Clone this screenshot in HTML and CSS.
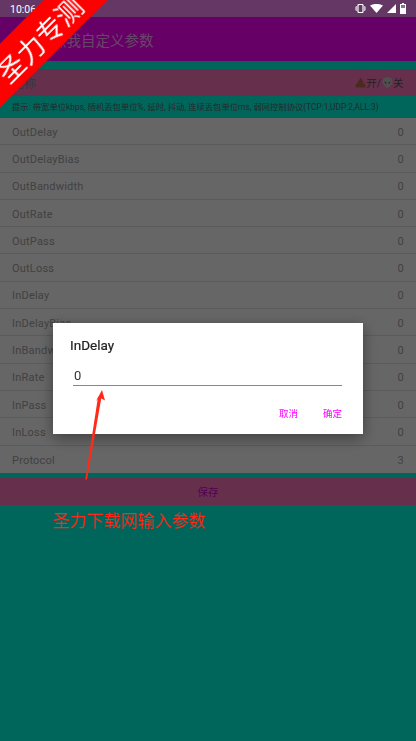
FILE: index.html
```html
<!DOCTYPE html>
<html lang="zh">
<head>
  <meta charset="UTF-8">
  <title>点我自定义参数</title>
  <meta name="viewport" content="width=device-width, initial-scale=1.0">
  <link rel="stylesheet" href="styles.css">
</head>
<body>
<div class="status-bar">
  <span class="hora">10:06</span>
  <div class="status-icons">
    <svg width="11" height="9" viewBox="0 0 11 9"><rect x="3" y="0.5" width="5" height="8" rx="1" fill="none" stroke="#fff" stroke-width="1.2"/><path d="M1.3 2v5M9.7 2v5M0 3v3M11 3v3" stroke="#fff" stroke-width="0.8"/></svg>
    <svg width="13" height="9" viewBox="0 0 13 9"><path d="M0 1.6Q6.500 -1.800 13 1.600L6.500 9Z" fill="#fff"/></svg>
    <svg width="9" height="9" viewBox="0 0 9 9"><path d="M9 0V9H0Z" fill="#fff"/></svg>
    <svg width="6" height="11" viewBox="0 0 6 11"><path d="M2 0H4V1H6V11H0V1H2Z" fill="#fff"/><path d="M1 2H5V5H1Z" fill="#8d6f8d"/></svg>
  </div>
</div>

<header class="app-bar">点我自定义参数</header>

<div class="linha-nome">
  <span>昵称</span>
  <span class="toggle">
    <svg width="11" height="11" viewBox="0 0 10 10"><path d="M5 0.500Q7 2 6.500 3Q8 4 7.500 5.500Q10 6.500 9.500 9.500H0.500Q0 6.500 2.500 5.500Q2 4 3.500 3.500Q4 2 5 0.500Z" fill="#b96a46"/></svg>开/<svg class="et" width="11" height="11" viewBox="0 0 10 10"><path d="M5 0.300C8 0.300 9.500 2.200 9.500 4.300C9.500 6.800 6.500 9.800 5 9.800C3.500 9.800 0.500 6.800 0.500 4.300C0.500 2.200 2 0.300 5 0.300Z" fill="#c5c5c5"/><path d="M1.800 3.800L4.200 5.400L3.600 6.200ZM8.200 3.800L5.800 5.400L6.400 6.200Z" fill="#2a2a2a"/></svg>关
  </span>
</div>
<p class="dica">提示: 带宽单位kbps, 随机丢包单位%, 延时, 抖动, 连续丢包单位ms, 弱网控制协议(TCP:1,UDP:2,ALL:3)</p>

<ul class="lista">
  <li><span>OutDelay</span><span>0</span></li>
  <li><span>OutDelayBias</span><span>0</span></li>
  <li><span>OutBandwidth</span><span>0</span></li>
  <li><span>OutRate</span><span>0</span></li>
  <li><span>OutPass</span><span>0</span></li>
  <li><span>OutLoss</span><span>0</span></li>
  <li><span>InDelay</span><span>0</span></li>
  <li><span>InDelayBias</span><span>0</span></li>
  <li><span>InBandwidth</span><span>0</span></li>
  <li><span>InRate</span><span>0</span></li>
  <li><span>InPass</span><span>0</span></li>
  <li><span>InLoss</span><span>0</span></li>
  <li><span>Protocol</span><span>3</span></li>
</ul>

<button class="salvar">保存</button>

<!-- fundo escuro e dialogo -->
<div class="scrim">
  <div class="dialogo">
    <h2>InDelay</h2>
    <div class="campo">0</div>
    <div class="acoes">
      <span>取消</span>
      <span>确定</span>
    </div>
  </div>
</div>

<!-- anotacoes por cima do screenshot -->
<div class="faixa"><span>圣力专测</span></div>
<svg class="seta" width="30" height="100" viewBox="0 0 30 100"><path d="M4.300 94.500L6 94.500L20.500 12L17 12Z" fill="#ff2a1a"/><path d="M21 5L24 15.500L18.500 12.500L15 16Z" fill="#ff2a1a"/></svg>
<div class="nota">圣力下载网输入参数</div>
</body>
</html>
```

FILE: styles.css
```css
html, body {
  margin: 0;
  padding: 0;
  height: 100%;
  overflow: hidden;
  background: #00ffe6;
  font-family: 'Roboto', 'Noto Sans CJK SC', sans-serif;
}
.status-bar {
  position: relative;
  z-index: 5;
  height: 17px;
  background: #653765;
  color: #fff;
  display: flex;
  align-items: center;
  justify-content: space-between;
  padding: 0 10px;
  font-size: 10.500px;
}
.hora {
  padding-top: 2px;
}
.status-icons {
  display: flex;
  align-items: center;
  gap: 4px;
}
.app-bar {
  height: 44px;
  background: #ff00ff;
  color: #ffb0ff;
  display: flex;
  align-items: center;
  padding-left: 52px;
  font-size: 14.500px;
  margin-bottom: 8px;
}
.linha-nome {
  height: 27px;
  background: #ff79c1;
  color: #888;
  display: flex;
  align-items: center;
  justify-content: space-between;
  padding: 0 12.500px 0 12px;
  font-size: 12px;
}
.toggle {
  display: flex;
  align-items: center;
  font-size: 10.500px;
  color: #555;
}
.et {
  margin-left: 1px;
}
.dica {
  margin: 0;
  height: 22px;
  line-height: 22px;
  padding-left: 12px;
  font-size: 8.340px;
  color: #666;
  white-space: nowrap;
}
.lista {
  list-style: none;
  margin: 0 0 5px 0;
  padding: 0;
  background: #fff;
}
.lista li {
  height: 24.300px;
  border-bottom: 1px solid #e4e4e4;
  margin: 0;
  padding: 2px 12px 0 12px;
  display: flex;
  align-items: center;
  justify-content: space-between;
  font-size: 11px;
  color: #a4a4a4;
  letter-spacing: 0.2px;
}
.lista li:last-child {
  border-bottom: none;
  height: 25.300px;
}
.salvar {
  display: block;
  width: 100%;
  height: 27px;
  border: none;
  padding: 0;
  background: #ff79c1;
  color: #d000d0;
  font-family: inherit;
  font-size: 10.500px;
}
.scrim {
  position: fixed;
  top: 0;
  left: 0;
  width: 100%;
  height: 100%;
  z-index: 3;
  background: rgba(0,0,0,0.6);
  display: flex;
  justify-content: center;
  align-items: flex-start;
  padding-top: 323px;
  box-sizing: border-box;
}
.dialogo {
  width: 310px;
  height: 111px;
  box-sizing: border-box;
  background: #fff;
  padding: 14px 21px 0 17px;
  box-shadow: 0 4px 14px rgba(0,0,0,0.4);
}
.dialogo h2 {
  margin: 0;
  font-size: 13.500px;
  font-weight: 400;
  -webkit-text-stroke: 0.2px #222;
  line-height: 16px;
  color: #222;
}
.campo {
  margin: 13px 0 0 3px;
  height: 19px;
  line-height: 20px;
  padding-left: 1px;
  font-size: 13px;
  color: #333;
  border-bottom: 1px solid #888;
}
.acoes {
  display: flex;
  justify-content: flex-end;
  gap: 25px;
  margin-top: 21px;
  font-size: 9.500px;
  line-height: 13px;
  color: #f0f;
}
.faixa {
  position: fixed;
  top: 15px;
  left: -62.500px;
  width: 200px;
  height: 45px;
  z-index: 6;
  background: #ff0000;
  color: #fff;
  transform: rotate(-45deg);
  display: flex;
  align-items: center;
  justify-content: center;
  font-size: 27px;
}
.faixa span {
  padding-top: 8px;
  line-height: 36px;
}
.seta {
  position: fixed;
  left: 81px;
  top: 385px;
  z-index: 6;
}
.nota {
  position: fixed;
  left: 53px;
  top: 509px;
  z-index: 6;
  color: #ff2a1a;
  font-size: 17px;
  line-height: 24px;
}
```
